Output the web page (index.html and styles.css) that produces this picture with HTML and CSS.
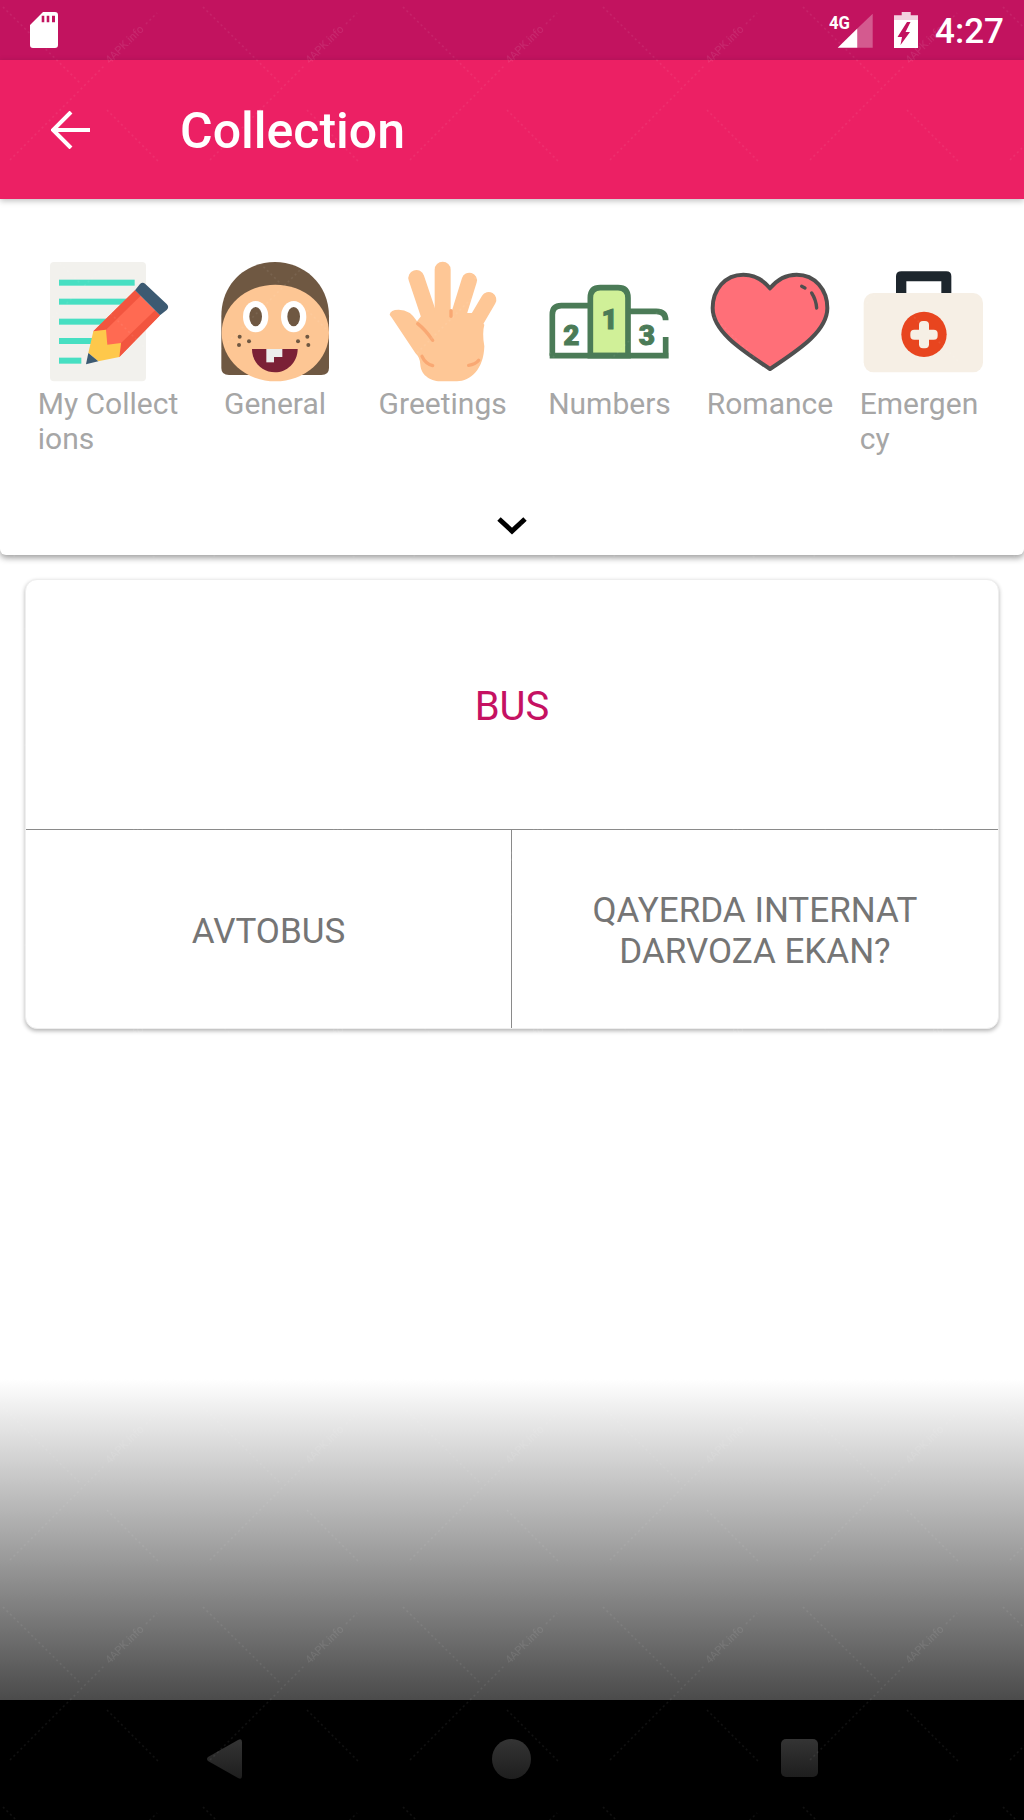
FILE: index.html
```html
<!DOCTYPE html>
<html lang="en">
<head>
<meta charset="utf-8">
<title>Collection</title>
<link rel="stylesheet" href="styles.css">
</head>
<body>
<div class="screen">
  <header class="statusbar">
    <svg class="sd" width="28" height="36" viewBox="0 0 28 36"><path class="white" fill-rule="evenodd" d="M13 0H25Q28 0 28 3V33Q28 36 25 36H3Q0 36 0 33V13ZM11.7 3.7V10.3H14.3V3.7ZM16.7 3.7V10.3H19.3V3.7ZM22 3.7V10.3H25V3.7Z"/></svg>
    <div class="status-right">
      <svg class="signal" width="44" height="36" viewBox="829 11 44 36">
        <polygon class="white" points="837.7,46.7 857.3,27.6 857.3,46.7"/>
        <polygon class="dim" points="857.3,27.6 872.7,12.7 872.7,46.7 857.3,46.7"/>
        <text class="four-g" x="829" y="27.7" textLength="21" lengthAdjust="spacingAndGlyphs">4G</text>
      </svg>
      <svg class="battery" width="24" height="36" viewBox="894 11 24 36">
        <path class="white" fill-rule="evenodd" d="M894 19H918V47H894ZM907 21L897.5 36H902L900.5 44L910 31H905.5L910.5 21Z"/>
        <path class="soft" d="M901.7 11H910.7V14.3H918V19H894V14.3H901.7Z"/>
      </svg>
      <span class="time">4:27</span>
    </div>
  </header>

  <div class="appbar">
    <svg class="back" width="39" height="38" viewBox="0 0 39 38"><path d="M39 19H3M20 1L2 19L20 37"/></svg>
    <h1 class="title">Collection</h1>
  </div>

  <section class="panel">
    <div class="categories">
      <div class="cat">
        <svg class="cat-icon" viewBox="90 37 360 360">
          <rect x="90" y="37" width="288" height="358" rx="12" fill="#f2f1ed"/>
          <g fill="#47dfc2">
            <rect x="117" y="90" width="227" height="18"/>
            <rect x="117" y="147" width="205" height="18"/>
            <rect x="117" y="207" width="145" height="18"/>
            <rect x="117" y="265" width="100" height="18"/>
            <rect x="117" y="324" width="67" height="18"/>
          </g>
          <polygon points="220,245 345,122 420,197 298,322" fill="#ff6a52"/>
          <polygon points="220,245 345,122 362,138 258,240" fill="#f2553f"/>
          <polygon points="298,322 303,280 405,182 420,197" fill="#f2553f"/>
          <path d="M345 122L360 103Q368 95 376 103L440 163Q449 172 440 181L420 197Z" fill="#3c5a72"/>
          <polygon points="220,245 258,240 262,285 303,280 298,322 235,335 205,310" fill="#fec84b"/>
          <polygon points="205,310 235,335 198,344" fill="#3c5a72"/>
        </svg>
        <span class="cat-label cat-label-first">My Collect<br>ions</span>
      </div>
      <div class="cat">
        <svg class="cat-icon" viewBox="586 37 360 360">
          <path d="M605 355V200C605 100 680 37 766 37C850 37 928 100 928 200V355Q928 376 905 376H628Q605 376 605 355Z" fill="#6f5842"/>
          <ellipse cx="767" cy="250" rx="161" ry="145" fill="#fdc694"/>
          <ellipse cx="708" cy="201" rx="38" ry="47" fill="#fff"/>
          <ellipse cx="822" cy="201" rx="38" ry="47" fill="#fff"/>
          <ellipse cx="708" cy="201" rx="19" ry="29" fill="#6f5842"/>
          <ellipse cx="822" cy="201" rx="19" ry="29" fill="#6f5842"/>
          <g fill="#6f5842">
            <circle cx="660" cy="261" r="6"/><circle cx="688" cy="275" r="6"/><circle cx="658" cy="286" r="6"/>
            <circle cx="835" cy="275" r="6"/><circle cx="863" cy="261" r="6"/><circle cx="866" cy="286" r="6"/>
          </g>
          <path d="M697 298H834C834 340 800 368 766 368C730 368 697 340 697 298Z" fill="#7b2136"/>
          <rect x="740" y="298" width="23" height="40" fill="#eceeec"/>
          <rect x="763" y="298" width="25" height="24" fill="#eceeec"/>
        </svg>
        <span class="cat-label">General</span>
      </div>
      <div class="cat">
        <svg class="cat-icon" viewBox="68 37 360 360">
          <g stroke="#fec796" stroke-linecap="round" fill="none">
            <path d="M168 85L205 195" stroke-width="48"/>
            <path d="M247 60V195" stroke-width="48"/>
            <path d="M327 92L295 195" stroke-width="46"/>
            <path d="M385 150L335 235" stroke-width="46"/>
          </g>
          <path d="M95 205L165 310Q180 325 180 345C182 380 215 395 245 395H290C330 395 370 360 372 290Q365 250 372 225L340 190H190L170 215Q150 180 115 180Q90 180 88 195Z" fill="#fec796"/>
          <g stroke="#f9a873" stroke-width="10" stroke-linecap="round" fill="none">
            <path d="M172 222Q195 240 217 272"/>
            <path d="M185 320Q195 342 217 348"/>
            <path d="M325 347Q345 345 355 332"/>
            <path d="M272 183V200"/>
          </g>
        </svg>
        <span class="cat-label">Greetings</span>
      </div>
      <div class="cat">
        <svg class="cat-icon" viewBox="568 37 360 360">
          <path d="M692 318V145Q692 114 722 114H775Q805 114 805 145V318Z" fill="#d0f098" stroke="#4b7b57" stroke-width="17"/>
          <path d="M578 318V195Q578 168 605 168H692" fill="none" stroke="#4b7b57" stroke-width="17"/>
          <path d="M805 185H890Q918 185 918 212M918 262V318M570 318H927" fill="none" stroke="#4b7b57" stroke-width="17"/>
          <text class="podium" x="635" y="285">2</text>
          <text class="podium" x="750" y="238">1</text>
          <text class="podium" x="862" y="287">3</text>
        </svg>
        <span class="cat-label">Numbers</span>
      </div>
      <div class="cat">
        <svg class="cat-icon" viewBox="60 37 360 360">
          <path d="M240 116C215 85 185 75 160 75C105 75 68 120 68 175C68 250 170 310 240 358C310 310 412 250 412 175C412 120 375 75 320 75C295 75 265 85 240 116Z" fill="#ff6f78" stroke="#4f4f4f" stroke-width="12" stroke-linejoin="round"/>
          <path d="M335 110L345 115M365 130Q378 150 380 175" fill="none" stroke="#4f4f4f" stroke-width="10" stroke-linecap="round"/>
        </svg>
        <span class="cat-label">Romance</span>
      </div>
      <div class="cat">
        <svg class="cat-icon" viewBox="520 37 360 360">
          <path d="M619 135V80Q619 65 635 65H770Q785 65 785 80V135H755V95H650V135Z" fill="#1d262d"/>
          <rect x="522" y="130" width="358" height="238" rx="30" fill="#f6efe5"/>
          <circle cx="703" cy="254" r="68" fill="#e8451f"/>
          <rect x="688" y="214" width="30" height="82" rx="12" fill="#f6efe5"/>
          <rect x="662" y="240" width="82" height="30" rx="12" fill="#f6efe5"/>
        </svg>
        <span class="cat-label cat-label-last">Emergen<br>cy</span>
      </div>
    </div>
    <svg class="chevron" width="32" height="20" viewBox="0 0 32 20"><path d="M3 4L16 16L29 4"/></svg>
  </section>

  <section class="card">
    <div class="card-word">BUS</div>
    <div class="card-row">
      <div class="card-cell">AVTOBUS</div>
      <div class="card-cell card-cell-right">QAYERDA INTERNAT<br>DARVOZA EKAN?</div>
    </div>
  </section>

  <div class="fade"></div>

  <nav class="navbar">
    <svg width="35" height="40" viewBox="0 0 35 40"><path class="nav-shape" d="M31 1Q35 -1 35 3V37Q35 41 31 39L1 22Q-1 20 1 18Z"/></svg>
    <svg width="39" height="40" viewBox="0 0 39 40"><ellipse class="nav-shape" cx="19.5" cy="20" rx="19.5" ry="20"/></svg>
    <svg width="37" height="38" viewBox="0 0 37 38"><rect class="nav-shape" width="37" height="38" rx="5"/></svg>
  </nav>

  <svg class="watermark" width="1024" height="1820" aria-hidden="true">
    <defs>
      <linearGradient id="navfade" x1="0" y1="0" x2="0" y2="1">
        <stop class="nav-top" offset="0"/>
        <stop class="nav-bottom" offset="1"/>
      </linearGradient>
      <pattern id="wm" width="200" height="200" patternUnits="userSpaceOnUse">
        <path class="wm-line" d="M10 160L105 65M146 24L157 13M3 7L80 83M107 110L160 163"/>
        <text class="wm-text" transform="translate(125 45) rotate(-45)">4APK.info</text>
      </pattern>
    </defs>
    <rect width="1024" height="1820" fill="url(#wm)"/>
  </svg>
</div>
</body>
</html>
```
FILE: styles.css
```css
* { box-sizing: border-box; }

html, body { margin: 0; padding: 0; background: #fff; }

.screen {
  position: relative;
  width: 1024px;
  height: 1820px;
  display: flex;
  flex-direction: column;
  overflow: hidden;
  font-family: Roboto, "Liberation Sans", sans-serif;
}

.white { fill: #fff; }
.dim { fill: rgba(255, 255, 255, 0.3); }
.soft { fill: rgba(255, 255, 255, 0.8); }

.statusbar {
  height: 60px;
  flex: none;
  background: #c2135f;
  display: flex;
  align-items: center;
  justify-content: space-between;
  padding: 0 20px 0 30px;
}

.status-right {
  display: flex;
  align-items: center;
}

.four-g {
  fill: #fff;
  font-size: 19px;
  font-weight: 700;
}

.battery { margin-left: 21px; }

.time {
  margin: 3px 0 0 17px;
  color: #fff;
  font-size: 35px;
  font-weight: 500;
  line-height: 57px;
}

.appbar {
  position: relative;
  z-index: 2;
  flex: none;
  height: 139px;
  background: #ec2064;
  display: flex;
  align-items: center;
  padding-left: 51px;
  box-shadow: 0 2px 6px rgba(0, 0, 0, 0.25);
}

.back {
  fill: none;
  stroke: #fff;
  stroke-width: 4;
}

.title {
  margin: 2px 0 0 90px;
  color: #fff;
  font-size: 50px;
  font-weight: 500;
  line-height: 56px;
}

.panel {
  position: relative;
  z-index: 1;
  flex: none;
  height: 356px;
  background: #fff;
  border-radius: 0 0 6px 6px;
  box-shadow: 0 3px 6px rgba(0, 0, 0, 0.38);
  padding-top: 63px;
  display: flex;
  flex-direction: column;
  align-items: center;
}

.categories {
  display: grid;
  grid-template-columns: 182px 148px 187.4px 146.2px 174.8px 132.2px;
  align-self: flex-start;
  padding-left: 19px;
  height: 194px;
}

.cat {
  display: flex;
  flex-direction: column;
  align-items: center;
}

.cat-icon {
  width: 120px;
  height: 120px;
  flex: none;
  overflow: visible;
}

.cat-label {
  margin-top: 4px;
  color: #a6a6a6;
  font-size: 30px;
  line-height: 35px;
  white-space: nowrap;
}

.cat-label-first { margin-right: 4px; }
.cat-label-last { margin-right: 9px; }

.podium {
  fill: #4b7b57;
  stroke: #4b7b57;
  stroke-width: 3;
  font-size: 84px;
  font-weight: 900;
  text-anchor: middle;
}

.chevron {
  margin-top: 59px;
  fill: none;
  stroke: #000;
  stroke-width: 5;
}

.card {
  flex: none;
  height: 450px;
  margin: 24px 25px 0 25px;
  background: #fff;
  border: 1px solid #eeeeee;
  border-radius: 12px;
  box-shadow: 0 2px 4px rgba(0, 0, 0, 0.3);
  display: flex;
  flex-direction: column;
  font-size: 35px;
  line-height: 41px;
}

.card-word {
  height: 250px;
  flex: none;
  display: flex;
  align-items: center;
  justify-content: center;
  padding-top: 3px;
  color: #c51162;
  font-size: 40px;
  border-bottom: 1px solid #8a8a8a;
}

.card-row {
  flex: 1;
  display: grid;
  grid-template-columns: 485px 1fr;
}

.card-cell {
  display: flex;
  align-items: center;
  justify-content: center;
  text-align: center;
  padding-top: 4px;
  color: #757575;
}

.card-cell-right { border-left: 1px solid #8a8a8a; }

.fade {
  flex: none;
  margin-top: auto;
  height: 321px;
  background: linear-gradient(#fff, #4b4b4b);
}

.navbar {
  flex: none;
  height: 120px;
  background: #000;
  display: flex;
  justify-content: center;
  align-items: flex-start;
  gap: 250px;
  padding-top: 39px;
}

.nav-shape { fill: url(#navfade); }
.nav-top { stop-color: #343434; }
.nav-bottom { stop-color: #1e1e1e; }

.watermark {
  position: absolute;
  inset: 0;
  pointer-events: none;
  z-index: 3;
}

.wm-line {
  fill: none;
  stroke: rgba(255, 255, 255, 0.065);
  stroke-width: 1.5;
  stroke-dasharray: 2 3;
}

.wm-text {
  fill: rgba(255, 255, 255, 0.09);
  font-size: 11px;
  text-anchor: middle;
  dominant-baseline: middle;
}
```
